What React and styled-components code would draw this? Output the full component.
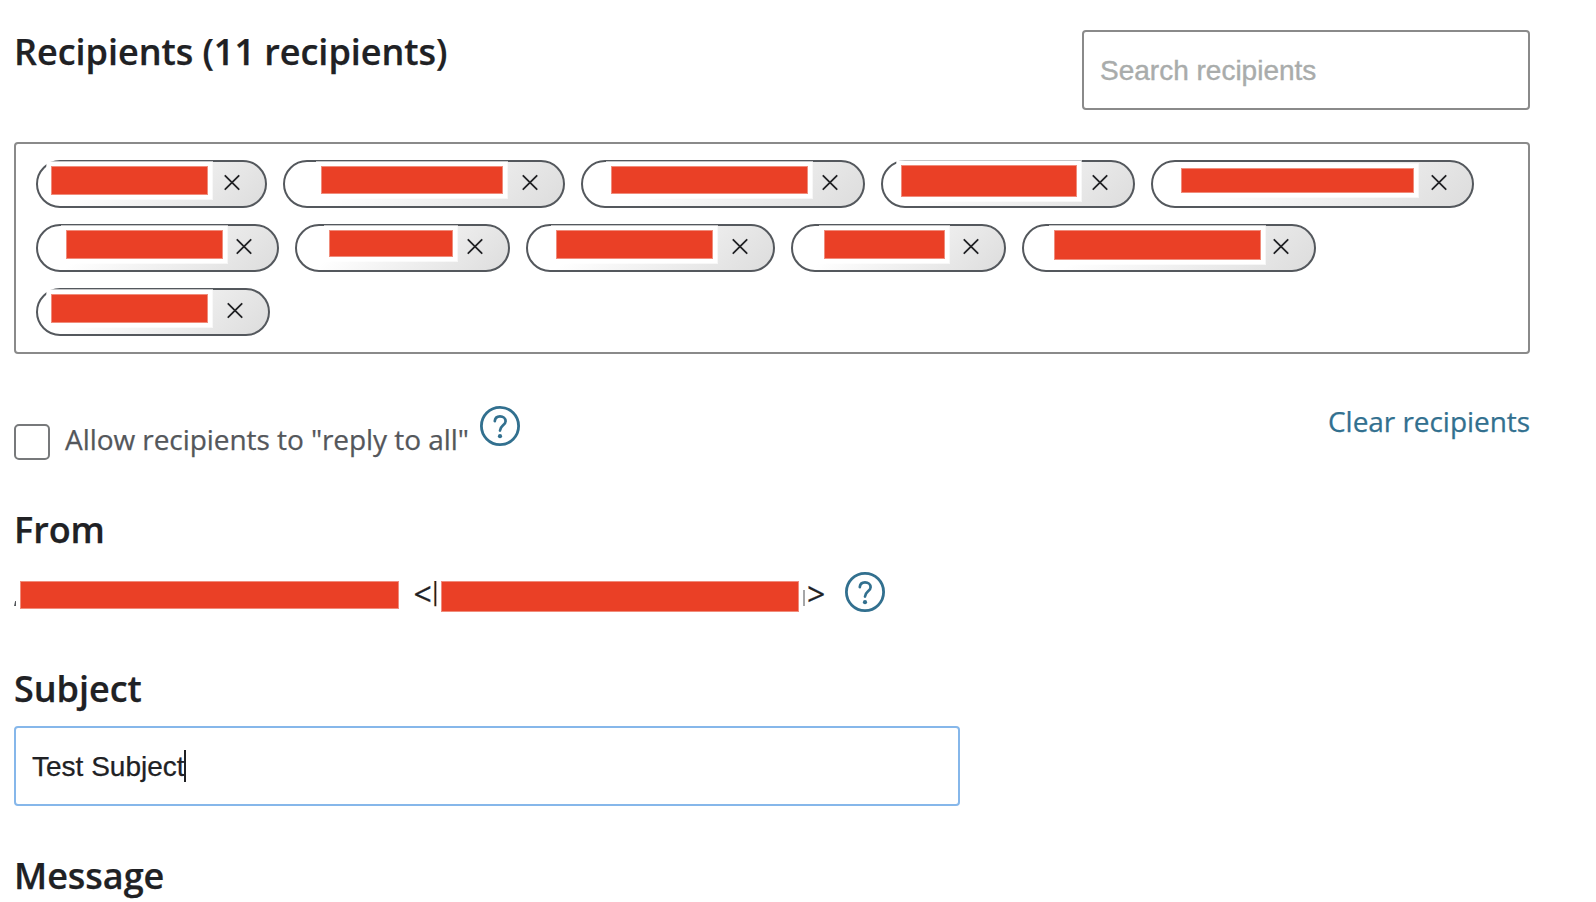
import React from 'react';
import styled, { createGlobalStyle } from 'styled-components';

const GlobalStyle = createGlobalStyle`
  * { box-sizing: border-box; }
  body {
    margin: 0;
    background: #fff;
    color: #202124;
    font-family: "Open Sans", "Noto Sans", sans-serif;
    -webkit-text-stroke: 0.25px currentColor;
    overflow: hidden;
  }
`;

const Page = styled.main`
  width: 1530px;
  height: 902px;
  padding: 28px 0 0 14px;
  overflow: hidden;
`;

const Header = styled.header`
  display: flex;
  justify-content: space-between;
  align-items: flex-start;
`;

const Heading = styled.h2`
  margin: 0;
  font-size: 36px;
  font-weight: 600;
  line-height: 48px;
  letter-spacing: -0.03px;
`;

const SearchInput = styled.input`
  width: 448px;
  height: 80px;
  margin-top: 2px;
  padding: 2px 16px 0;
  border: 2px solid #8a8a8a;
  border-radius: 4px;
  font: 28px "Liberation Sans", Arial, sans-serif;
  outline: none;
  &::placeholder {
    color: #a9acab;
    opacity: 1;
    -webkit-text-stroke: 0.4px #a9acab;
  }
`;

const RecipientBox = styled.section`
  display: flex;
  flex-wrap: wrap;
  align-content: flex-start;
  gap: 16px;
  height: 212px;
  margin-top: 32px;
  padding: 16px 20px;
  border: 2px solid #8a8a8a;
  border-radius: 4px;
`;

const Chip = styled.div`
  display: flex;
  align-items: flex-start;
  justify-content: space-between;
  width: ${(p) => p.$width}px;
  height: 48px;
  padding-right: 25px;
  border: 2px solid #54585d;
  border-radius: 24px;
  background: linear-gradient(135deg, #fff 25%, #dcdcdc) border-box;
`;

const Redaction = styled.span`
  flex: none;
  width: ${(p) => p.$width}px;
  height: ${(p) => p.$height}px;
  margin: ${(p) => p.$top || 0}px 0 0 ${(p) => p.$left || 0}px;
  border: 1px solid #f08c7b;
  background: #ea4026;
  box-shadow: 0 0 0 4px #fff, 0 0 0 5px rgba(255, 255, 255, 0.65);
`;

const RemoveButton = styled.button`
  display: flex;
  margin: 12px 0 0;
  padding: 0;
  border: 0;
  background: none;
  color: #202124;
`;

const Options = styled.section`
  display: flex;
  align-items: flex-start;
  height: 105px;
  margin-top: 47px;
`;

const Checkbox = styled.input`
  appearance: none;
  width: 36px;
  height: 36px;
  margin: 23px 15px 0 0;
  border: 2px solid #77797b;
  border-radius: 5px;
  background: #fff;
`;

const OptionLabel = styled.label`
  margin-top: 18px;
  color: #54575b;
  font-size: 28px;
  line-height: 40px;
  letter-spacing: -0.06px;
  white-space: nowrap;
`;

const HelpButton = styled.button`
  display: flex;
  margin: ${(p) => p.$top || 0}px 0 0 ${(p) => p.$left}px;
  padding: 0;
  border: 0;
  background: none;
  color: #32708f;
`;

const ClearLink = styled.a`
  margin-left: auto;
  color: #32708f;
  font-size: 28px;
  line-height: 40px;
  letter-spacing: -0.05px;
`;

const Sender = styled.div`
  display: flex;
  align-items: flex-start;
  height: 44px;
  margin: 18px 0 49px;
  font-size: 32px;
  line-height: 44px;
`;

const Bracket = styled.span`
  flex: none;
  width: ${(p) => p.$width}px;
  margin-left: ${(p) => p.$left}px;
  white-space: nowrap;
`;

const Sliver = styled.span`
  flex: none;
  width: 2px;
  height: ${(p) => p.$height}px;
  margin: ${(p) => 34 - p.$height}px 0 0 ${(p) => p.$left || 0}px;
  background: ${(p) => p.$color};
  clip-path: ${(p) => p.$clip || 'none'};
`;

const SubjectField = styled.div`
  display: flex;
  align-items: center;
  width: 946px;
  height: 80px;
  margin: 13px 0 46px;
  padding: 0 16px;
  border: 2px solid #86b7ea;
  border-radius: 4px;
  font: 28px "Liberation Sans", Arial, sans-serif;
`;

const SubjectText = styled.span`
  padding-top: 2px;
`;

const Caret = styled.span`
  width: 2px;
  height: 32px;
  margin-left: -1px;
  background: #202124;
`;

const recipients = [
  { width: 231, left: 13, top: 4, bar: 157, height: 29 },
  { width: 282, left: 36, top: 4, bar: 182, height: 28 },
  { width: 284, left: 28, top: 4, bar: 197, height: 28 },
  { width: 254, left: 18, top: 3, bar: 176, height: 32 },
  { width: 323, left: 28, top: 6, bar: 233, height: 25 },
  { width: 243, left: 28, top: 4, bar: 157, height: 29 },
  { width: 215, left: 32, top: 4, bar: 124, height: 27 },
  { width: 249, left: 28, top: 4, bar: 157, height: 29 },
  { width: 215, left: 31, top: 4, bar: 121, height: 29 },
  { width: 294, left: 30, top: 4, bar: 207, height: 30 },
  { width: 234, left: 13, top: 4, bar: 157, height: 29 },
];

const CloseIcon = () => (
  <svg width="16" height="17" viewBox="0 0 16 17" fill="none" stroke="currentColor" strokeWidth="1.8" strokeLinecap="round">
    <path d="M1.3 1.8 14.7 15.2M14.7 1.8 1.3 15.2" />
  </svg>
);

const HelpIcon = () => (
  <svg width="40" height="40" viewBox="0 0 40 40" fill="none" stroke="currentColor">
    <circle cx="20" cy="20" r="18.6" strokeWidth="2.8" />
    <path d="M14.8 15.2C15 12 17.2 10.4 20 10.4C23.2 10.4 25.6 12.3 25.6 15.2C25.6 19.2 20 19.5 20 24.6" strokeWidth="2.7" strokeLinecap="round" />
    <circle cx="20" cy="30.2" r="2.1" fill="currentColor" stroke="none" />
  </svg>
);

export default function App() {
  return (
    <>
      <GlobalStyle />
      <Page>
        <Header>
          <Heading>Recipients (11 recipients)</Heading>
          <SearchInput placeholder="Search recipients" />
        </Header>
        <RecipientBox>
          {recipients.map((r, i) => (
            <Chip key={i} $width={r.width}>
              <Redaction $width={r.bar} $height={r.height} $left={r.left} $top={r.top} />
              <RemoveButton aria-label="Remove recipient"><CloseIcon /></RemoveButton>
            </Chip>
          ))}
        </RecipientBox>
        <Options>
          <Checkbox type="checkbox" id="reply-all" />
          <OptionLabel htmlFor="reply-all">Allow recipients to "reply to all"</OptionLabel>
          <HelpButton $left={11} $top={5} aria-label="Help"><HelpIcon /></HelpButton>
          <ClearLink>Clear recipients</ClearLink>
        </Options>
        <Heading>From</Heading>
        <Sender>
          <Sliver $height={5} $color="#54575b" $clip="polygon(60% 0, 100% 0, 100% 100%, 0 100%)" />
          <Redaction $left={4} $top={9} $width={379} $height={28} />
          <Bracket $left={14.5} $width={27.5}>&lt;l</Bracket>
          <Redaction $top={9} $width={358} $height={31} />
          <Sliver $left={4} $height={16} $color="#a5a6a8" />
          <Bracket $left={2} $width={18}>&gt;</Bracket>
          <HelpButton $left={20} aria-label="Help"><HelpIcon /></HelpButton>
        </Sender>
        <Heading>Subject</Heading>
        <SubjectField><SubjectText>Test Subject</SubjectText><Caret /></SubjectField>
        <Heading>Message</Heading>
      </Page>
    </>
  );
}
